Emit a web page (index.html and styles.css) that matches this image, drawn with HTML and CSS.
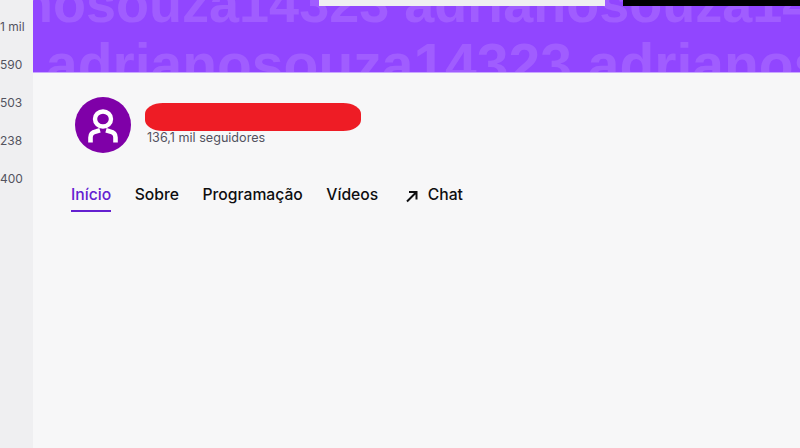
FILE: index.html
```html
<!DOCTYPE html>
<html lang="pt-BR">
<head>
<meta charset="utf-8">
<title>Canal</title>
<link rel="stylesheet" href="styles.css">
</head>
<body>
<div class="page">
  <aside class="sidebar">
    <div class="count">1 mil</div>
    <div class="count">590</div>
    <div class="count">503</div>
    <div class="count">238</div>
    <div class="count">400</div>
  </aside>
  <main class="main">
    <div class="banner">
      <div class="wm wm-top">adrianosouza14323 adrianosouza14323 adrianosouza14323</div>
      <div class="wm wm-bottom">adrianosouza14323 adrianosouza14323</div>
      <div class="player-bits">
        <div class="bit-light"></div>
        <div class="bit-dark"></div>
      </div>
    </div>
    <section class="channel">
      <div class="avatar">
        <svg viewBox="0 0 56 56" width="56" height="56" aria-hidden="true">
          <ellipse cx="28" cy="22" rx="8" ry="7.500" fill="none" stroke="#fff" stroke-width="4.400"/>
          <path d="M15.500 45.500v-5c0-4 2.500-5.500 5.500-6l4-1.200M40.500 45.500v-5c0-4-2.500-5.500-5.500-6l-4-1.200" fill="none" stroke="#fff" stroke-width="4.600"/>
        </svg>
      </div>
      <div class="info">
        <div class="redaction"></div>
        <div class="followers">136,1 mil seguidores</div>
      </div>
    </section>
    <nav class="tabs">
      <a class="tab active">Início</a>
      <a class="tab">Sobre</a>
      <a class="tab">Programação</a>
      <a class="tab">Vídeos</a>
      <a class="tab chat">
        <svg viewBox="0 0 14 14" width="14" height="14" aria-hidden="true">
          <path d="M2 12.500 11 3.500M4 3h7.500v7.500" fill="none" stroke="#0e0e10" stroke-width="2"/>
        </svg>
        Chat
      </a>
    </nav>
  </main>
</div>
</body>
</html>
```
FILE: styles.css
```css
html, body {
  margin: 0;
  padding: 0;
  height: 100%;
  overflow: hidden;
}
body {
  background: #f7f7f8;
  font-family: Inter, "Liberation Sans", sans-serif;
}
.page {
  display: flex;
  height: 448px;
  width: 800px;
}
.sidebar {
  width: 33px;
  flex: none;
  background: #efeff1;
  padding: 19px 0 0 0;
  box-sizing: border-box;
  display: flex;
  flex-direction: column;
  gap: 23px;
}
.count {
  font-size: 12px;
  line-height: 15px;
  color: #53535f;
  white-space: nowrap;
}
.main {
  flex: 1;
  min-width: 0;
  background: #f7f7f8;
}
.banner {
  position: relative;
  height: 72px;
  background: #9146ff;
  overflow: hidden;
  border-bottom: 1px solid #c9a6ff;
  margin-bottom: -1px;
}
.wm {
  font-family: "Liberation Sans", Arial, sans-serif;
  font-weight: 700;
  color: #a05dff;
  white-space: nowrap;
}
.wm-top {
  font-size: 54px;
  line-height: 60px;
  margin-top: -27px;
  margin-left: -142px;
}
.wm-bottom {
  font-size: 57px;
  line-height: 60px;
  margin-top: 1px;
  margin-left: 13px;
}
.player-bits {
  position: absolute;
  top: 0;
  left: 286px;
  right: 0;
  display: flex;
  gap: 18px;
}
.bit-light {
  width: 286px;
  height: 6px;
  background: #efeff1;
}
.bit-dark {
  flex: 1;
  height: 6px;
  background: #000;
}
.channel {
  display: flex;
  align-items: flex-start;
  gap: 14px;
  padding: 25px 0 0 42px;
}
.avatar {
  width: 56px;
  height: 56px;
  border-radius: 50%;
  background: #7f00a8;
  flex: none;
}
.avatar svg {
  display: block;
}
.info {
  padding-top: 6px;
}
.redaction {
  width: 216px;
  height: 28px;
  background: #ee1c25;
  border-radius: 18px / 11px;
}
.followers {
  font-size: 12.600px;
  line-height: 14px;
  color: #53535f;
  margin-left: 2px;
}
.tabs {
  display: flex;
  gap: 23.500px;
  padding: 32px 0 0 38px;
}
.tab {
  font-size: 15.700px;
  line-height: 20px;
  font-weight: 500;
  color: #0e0e10;
  height: 25px;
  white-space: nowrap;
}
.tab.active {
  color: #6420d0;
  border-bottom: 2px solid #6420d0;
}
.tab.chat {
  display: flex;
  gap: 9px;
  margin-left: 3px;
}
.tab.chat svg {
  margin-top: 4px;
}
```
